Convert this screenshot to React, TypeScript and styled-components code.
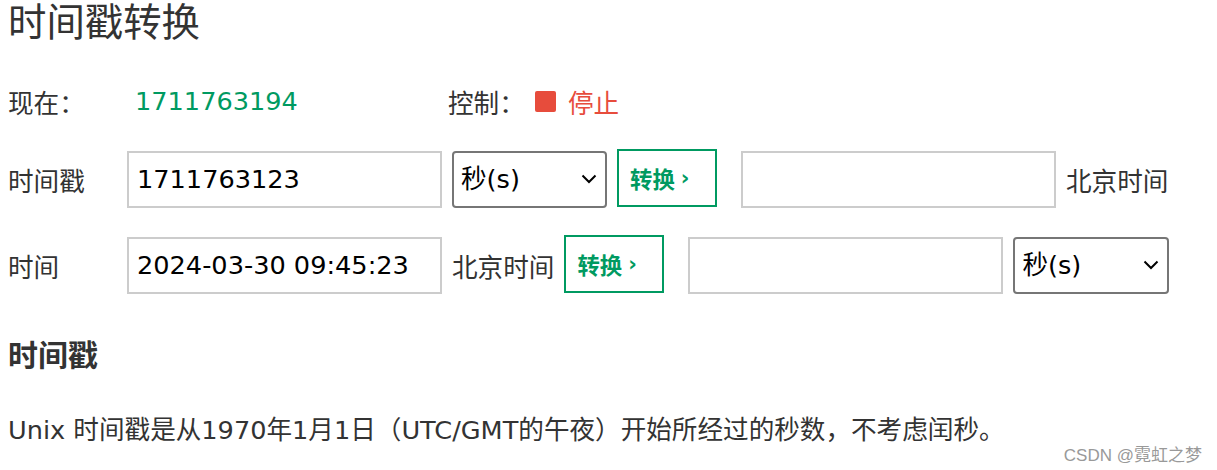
import React from "react";
import styled, { createGlobalStyle } from "styled-components";

const GlobalStyle = createGlobalStyle`
  html, body { margin: 0; padding: 0; background: #fff; }
  body {
    font-family: "DejaVu Sans", Verdana, "Noto Sans CJK SC", sans-serif;
    color: #333;
  }
  * { box-sizing: border-box; }
`;

const Page = styled.div`
  position: relative;
  width: 1217px;
  height: 470px;
  padding: 0 8px;
  display: flex;
  flex-direction: column;
  overflow: hidden;
`;

const Title = styled.h1`
  margin: 0;
  font-size: 38.4px;
  font-weight: 400;
  line-height: 46px;
  color: #333;
`;

const Row = styled.div<{ $top: number; $height: number }>`
  display: flex;
  align-items: center;
  gap: 10px;
  margin-top: ${(p) => p.$top}px;
  height: ${(p) => p.$height}px;
  font-size: 25.6px;
`;

const Label = styled.span<{ $width: number }>`
  width: ${(p) => p.$width}px;
  flex: none;
  color: #333;
  white-space: nowrap;
`;

const NowValue = styled.span`
  width: 303px;
  flex: none;
  color: #009a61;
`;

const StopSquare = styled.span`
  width: 21px;
  height: 21px;
  border-radius: 2px;
  background: #e74c3c;
  flex: none;
  margin-right: 2px;
`;

const StopText = styled.span`
  color: #e74c3c;
`;

const TextInput = styled.input`
  width: 315px;
  height: 57px;
  flex: none;
  border: 2px solid #ccc;
  padding: 0 8px;
  font-family: inherit;
  font-size: 25.6px;
  color: #000;
  background: #fff;
  outline: none;
`;

const SelectWrap = styled.div<{ $width: number }>`
  position: relative;
  width: ${(p) => p.$width}px;
  height: 57px;
  flex: none;
`;

const Select = styled.select`
  appearance: none;
  width: 100%;
  height: 100%;
  border: 2px solid #767676;
  border-radius: 4px;
  padding: 0 0 0 7px;
  font-family: inherit;
  font-size: 25.6px;
  color: #000;
  background: #fff;
  outline: none;
`;

const Chevron = styled.svg`
  position: absolute;
  right: 10px;
  top: 50%;
  transform: translateY(-50%);
  pointer-events: none;
`;

const ConvertButton = styled.button`
  width: 100px;
  height: 58px;
  flex: none;
  margin-top: -3px;
  margin-right: 14px;
  border: 2px solid #009a61;
  background: #fff;
  color: #009a61;
  font-family: inherit;
  font-size: 22.4px;
  font-weight: 700;
  text-align: left;
  padding: 0 0 0 11px;
  display: flex;
  align-items: center;
  gap: 6px;
`;

const Arrow = styled.span`
  font-size: 21px;
  font-weight: 700;
  line-height: 1;
  margin-top: 2px;
`;

const Plain = styled.span`
  color: #333;
  white-space: nowrap;
`;

const SubTitle = styled.h3`
  margin: 42px 0 0;
  font-size: 29.95px;
  font-weight: 700;
  line-height: 40px;
  color: #333;
`;

const Para = styled.p`
  margin: 34px 0 0;
  font-size: 25.6px;
  line-height: 40px;
  color: #333;
  white-space: nowrap;
`;

const Watermark = styled.div`
  position: absolute;
  right: 15px;
  top: 441px;
  font-family: "Liberation Sans", "Noto Sans CJK SC", sans-serif;
  font-size: 17px;
  color: #999;
  white-space: nowrap;
`;

const UnitSelect = ({ width }: { width: number }) => (
  <SelectWrap $width={width}>
    <Select defaultValue="s">
      <option value="s">秒(s)</option>
      <option value="ms">毫秒(ms)</option>
    </Select>
    <Chevron width="16" height="10" viewBox="0 0 16 10">
      <path d="M1.5 1.5 L8 8 L14.5 1.5" fill="none" stroke="#000" strokeWidth="2" />
    </Chevron>
  </SelectWrap>
);

const Convert = () => (
  <ConvertButton>
    转换<Arrow>›</Arrow>
  </ConvertButton>
);

export default function App() {
  return (
    <>
      <GlobalStyle />
      <Page>
        <Title>时间戳转换</Title>
        <Row $top={35} $height={40}>
          <Label $width={117}>现在：</Label>
          <NowValue>1711763194</NowValue>
          <Label $width={77}>控制：</Label>
          <StopSquare />
          <StopText>停止</StopText>
        </Row>
        <Row $top={29} $height={58}>
          <Label $width={109}>时间戳</Label>
          <TextInput defaultValue="1711763123" />
          <UnitSelect width={155} />
          <Convert />
          <TextInput defaultValue="" />
          <Plain>北京时间</Plain>
        </Row>
        <Row $top={28} $height={58}>
          <Label $width={109}>时间</Label>
          <TextInput defaultValue="2024-03-30 09:45:23" />
          <Plain>北京时间</Plain>
          <Convert />
          <TextInput defaultValue="" />
          <UnitSelect width={156} />
        </Row>
        <SubTitle>时间戳</SubTitle>
        <Para>Unix 时间戳是从1970年1月1日（UTC/GMT的午夜）开始所经过的秒数，不考虑闰秒。</Para>
        <Watermark>CSDN @霓虹之梦</Watermark>
      </Page>
    </>
  );
}
